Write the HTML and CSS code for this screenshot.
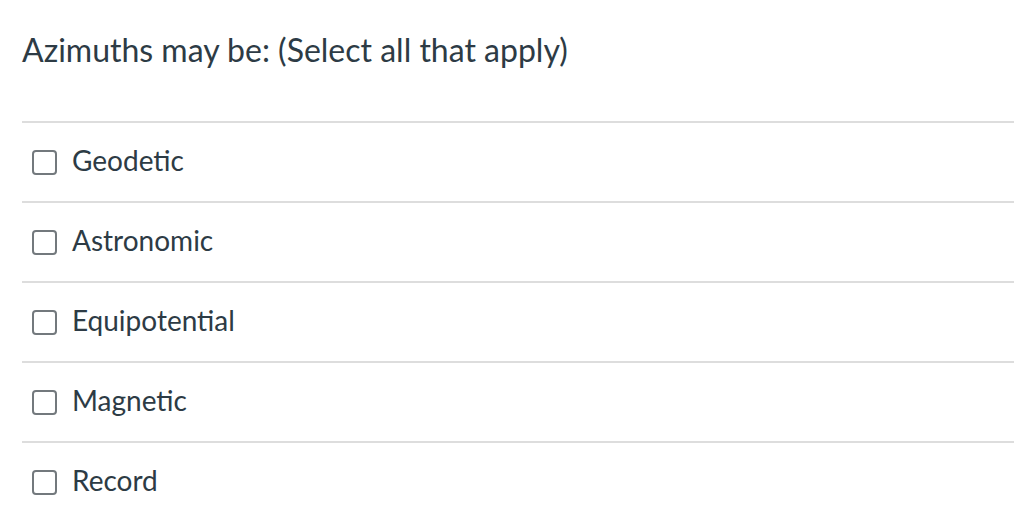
FILE: index.html
```html
<!DOCTYPE html>
<html>
<head>
<meta charset="utf-8">
<link rel="stylesheet" href="styles.css">
</head>
<body>
<div class="quiz">
  <h2 class="question">Azimuths may be: (Select all that apply)</h2>
  <ul class="answers">
    <li class="answer"><span class="box"></span><span class="label">Geodetic</span></li>
    <li class="answer"><span class="box"></span><span class="label">Astronomic</span></li>
    <li class="answer"><span class="box"></span><span class="label">Equipotential</span></li>
    <li class="answer"><span class="box"></span><span class="label">Magnetic</span></li>
    <li class="answer"><span class="box"></span><span class="label">Record</span></li>
  </ul>
</div>
</body>
</html>
```
FILE: styles.css
```css
html, body {
  margin: 0;
  padding: 0;
  background: #fff;
}
body {
  font-family: Lato, "Liberation Sans", sans-serif;
  color: #2d3b45;
}
.quiz {
  padding: 0 14px 0 22px;
}
.question {
  margin: 0;
  padding-top: 30px;
  height: 121px;
  box-sizing: border-box;
  font-size: 32px;
  font-weight: 400;
  line-height: 40px;
}
.answers {
  list-style: none;
  margin: 0;
  padding: 0;
}
.answer {
  display: flex;
  align-items: center;
  gap: 15px;
  height: 80px;
  box-sizing: border-box;
  border-top: 2px solid #dddddd;
  padding: 0 10px 4px;
}
.box {
  width: 25px;
  height: 25px;
  box-sizing: border-box;
  border: 2px solid #73797d;
  border-radius: 4px;
  flex: none;
  margin-top: 4px;
}
.label {
  font-size: 28px;
  line-height: 32px;
}
```
